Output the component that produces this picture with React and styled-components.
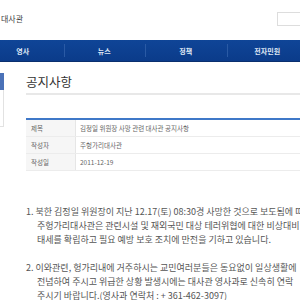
import React from "react";
import styled, { createGlobalStyle } from "styled-components";

const Global = createGlobalStyle`
  html, body {
    margin: 0;
    padding: 0;
    background: #fff;
    overflow: hidden;
  }
  body {
    font-family: "Noto Sans CJK KR", "Noto Sans", sans-serif;
    color: #555;
  }
`;

const Page = styled.div`
  width: 300px;
  height: 300px;
  overflow: hidden;
`;

const Header = styled.div`
  height: 40px;
  display: flex;
  align-items: center;
  justify-content: space-between;
  padding-bottom: 1px;
  box-sizing: border-box;
`;

const Logo = styled.div`
  font-size: 8px;
  color: #444;
  padding-left: 1px;
  margin-top: -2px;
`;

const Search = styled.div`
  width: 22px;
  height: 12px;
  border: 1px solid #ddd;
  border-right: none;
  margin-top: -2px;
`;

const Nav = styled.div`
  height: 21px;
  background: linear-gradient(#0f4597, #0b3b8a);
  display: flex;
  margin-left: -18px;
  border-bottom: 1px solid #0a2f6e;
`;

const NavItem = styled.div`
  flex: 0 0 81.5px;
  display: flex;
  align-items: center;
  justify-content: center;
  color: #dfe7f5;
  font-size: 7px;
  font-weight: 700;
  position: relative;
  & + &::before {
    content: "";
    position: absolute;
    left: 0;
    top: 4px;
    bottom: 4px;
    width: 1px;
    background: #2a5aa5;
  }
`;

const Body = styled.div`
  display: flex;
  padding-top: 11px;
`;

const Side = styled.div`
  width: 4px;
  flex: 0 0 4px;
  display: flex;
  flex-direction: column;
`;

const SideTab = styled.div`
  height: 17px;
  background: #4b72b8;
`;

const SideBox = styled.div`
  height: 36px;
  border-right: 1px solid #e2e2e2;
  border-bottom: 1px solid #e2e2e2;
`;

const Main = styled.div`
  flex: 1;
  padding-left: 22px;
  min-width: 0;
`;

const Title = styled.div`
  font-size: 12.5px;
  color: #333;
  line-height: 18px;
  padding-bottom: 2px;
  border-bottom: 2px solid #e8e8e8;
`;

const Table = styled.div`
  margin-top: 23px;
  border-top: 2px solid #3f78c8;
`;

const Row = styled.div`
  display: flex;
  height: 16px;
  border-bottom: 1px solid #ececec;
  font-size: 6.5px;
  color: #666;
`;

const Label = styled.div`
  width: 50px;
  background: #f6f6f6;
  border-right: 1px solid #e6e6e6;
  display: flex;
  align-items: center;
  padding-left: 5px;
  box-sizing: border-box;
`;

const Value = styled.div`
  display: flex;
  align-items: center;
  padding-left: 4px;
  white-space: nowrap;
`;

const Content = styled.div`
  margin-top: 34px;
  font-size: 9px;
  line-height: 14px;
  color: #555;
  white-space: nowrap;
`;

const Para = styled.p`
  margin: 0 0 14px 0;
`;

const Indent = styled.span`
  display: block;
  padding-left: 11px;
`;

const rows = [
  ["제목", "김정일 위원장 사망 관련 대사관 공지사항"],
  ["작성자", "주헝가리대사관"],
  ["작성일", "2011-12-19"],
];

export default function App() {
  return (
    <Page>
      <Global />
      <Header>
        <Logo>대사관</Logo>
        <Search />
      </Header>
      <Nav>
        <NavItem>영사</NavItem>
        <NavItem>뉴스</NavItem>
        <NavItem>정책</NavItem>
        <NavItem>전자민원</NavItem>
      </Nav>
      <Body>
        <Side>
          <SideTab />
          <SideBox />
        </Side>
        <Main>
          <Title>공지사항</Title>
          <Table>
            {rows.map(([k, v]) => (
              <Row key={k}>
                <Label>{k}</Label>
                <Value>{v}</Value>
              </Row>
            ))}
          </Table>
          <Content>
            <Para>
              1. 북한 김정일 위원장이 지난 12.17(토) 08:30경 사망한 것으로 보도됨에 따라
              <Indent>주헝가리대사관은 관련시설 및 재외국민 대상 테러위협에 대한 비상대비</Indent>
              <Indent>태세를 확립하고 필요 예방 보호 조치에 만전을 기하고 있습니다.</Indent>
            </Para>
            <Para>
              2. 이와관련, 헝가리내에 거주하시는 교민여러분들은 동요없이 일상생활에
              <Indent>전념하여 주시고 위급한 상황 발생시에는 대사관 영사과로 신속히 연락</Indent>
              <Indent>주시기 바랍니다.(영사과 연락처 : + 361-462-3097)</Indent>
            </Para>
          </Content>
        </Main>
      </Body>
    </Page>
  );
}
